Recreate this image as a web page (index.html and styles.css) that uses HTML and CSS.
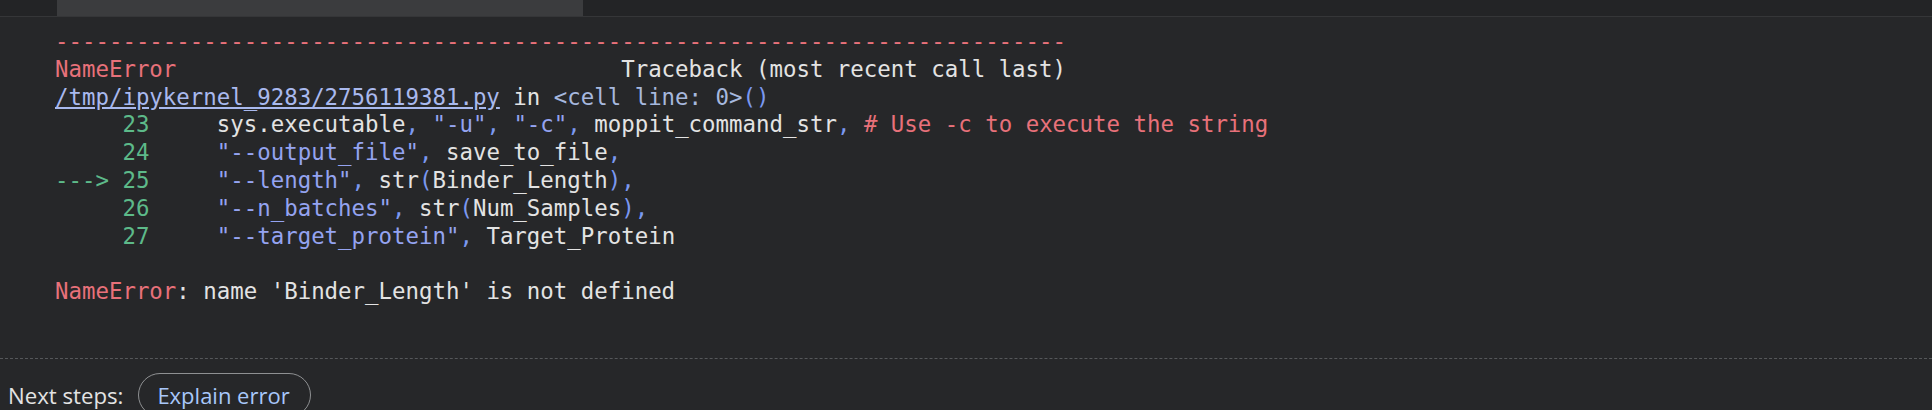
FILE: index.html
```html
<!DOCTYPE html>
<html>
<head>
<meta charset="utf-8">
<link rel="stylesheet" href="styles.css">
</head>
<body>
<div class="topbar"><div class="thumb"></div></div>
<div class="output">
<pre class="tb"><span class="r">---------------------------------------------------------------------------</span>
<span class="r">NameError</span>                                 Traceback (most recent call last)
<a class="lnk">/tmp/ipykernel_9283/2756119381.py</a> in <span class="cell">&lt;cell line: 0&gt;</span><span class="p">()</span>
<span class="g">     23</span>     sys.executable<span class="p">,</span> <span class="s">"-u"</span><span class="p">,</span> <span class="s">"-c"</span><span class="p">,</span> moppit_command_str<span class="p">,</span> <span class="r"># Use -c to execute the string</span>
<span class="g">     24</span>     <span class="s">"--output_file"</span><span class="p">,</span> save_to_file<span class="p">,</span>
<span class="g">---&gt; 25</span>     <span class="s">"--length"</span><span class="p">,</span> str<span class="p">(</span>Binder_Length<span class="p">),</span>
<span class="g">     26</span>     <span class="s">"--n_batches"</span><span class="p">,</span> str<span class="p">(</span>Num_Samples<span class="p">),</span>
<span class="g">     27</span>     <span class="s">"--target_protein"</span><span class="p">,</span> Target_Protein

<span class="r">NameError</span>: name 'Binder_Length' is not defined</pre>
</div>
<div class="next">
<span class="label">Next steps:</span>
<button class="explain">Explain error</button>
</div>
</body>
</html>
```
FILE: styles.css
```css
html, body {
  margin: 0;
  padding: 0;
  background: #262729;
  overflow: hidden;
  width: 1932px;
  height: 410px;
}
.topbar {
  height: 16px;
  background: #232426;
  border-bottom: 1px solid #353638;
  padding-left: 57px;
}
.thumb {
  width: 526px;
  height: 16px;
  background: #3b3c3e;
}
.output {
  padding: 11px 0 0 55px;
  height: 330px;
  box-sizing: border-box;
}
.tb {
  margin: 0;
  font-family: "DejaVu Sans Mono", monospace;
  font-size: 22.4px;
  line-height: 27.8px;
  color: #e3e3e3;
}
.r { color: #e8717a; }
.g { color: #5dba89; }
.p { color: #7b98f0; }
.s { color: #94a3f0; }
.cell { color: #a6b8de; }
.lnk {
  color: #a9b9ee;
  text-decoration: underline;
}
.next {
  border-top: 1px dashed #55575a;
  margin-top: 11px;
  display: flex;
  align-items: center;
  gap: 15px;
  padding: 14px 0 0 8px;
}
.label {
  font-family: "Open Sans", Roboto, sans-serif;
  font-size: 22.2px;
  font-weight: 500;
  color: #e3e3e3;
}
.explain {
  background: transparent;
  border: 1px solid #8e9092;
  border-radius: 22px;
  height: 44px;
  padding: 0 20px 0 18px;
  font-family: "Open Sans", Roboto, sans-serif;
  font-size: 22px;
  font-weight: 500;
  color: #a8c7fa;
}
```
